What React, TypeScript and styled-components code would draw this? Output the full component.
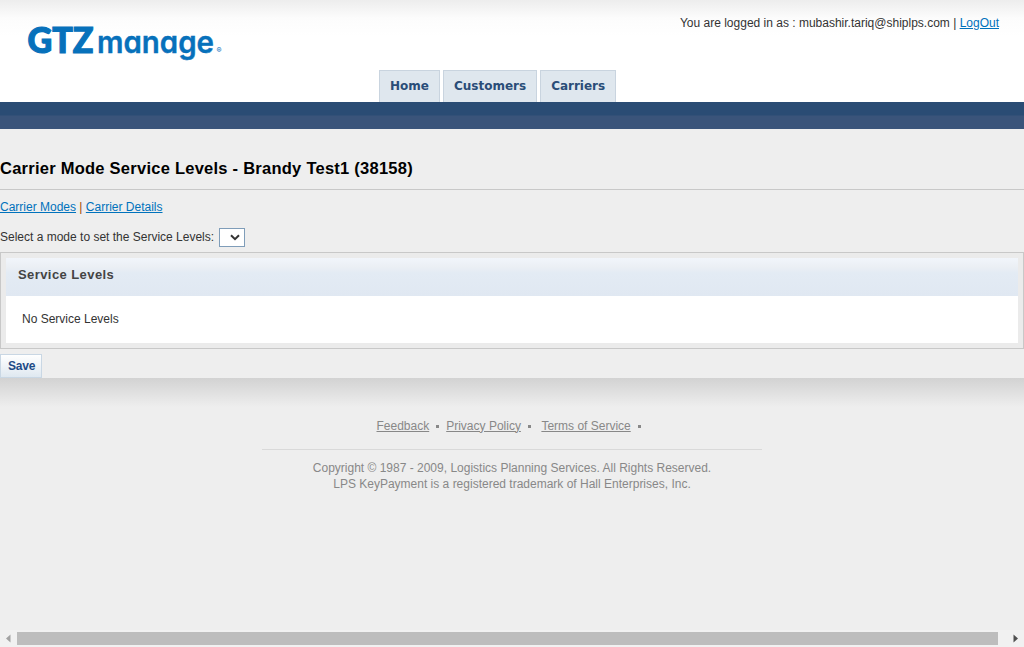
import React from "react";
import styled, { createGlobalStyle } from "styled-components";

const GlobalStyle = createGlobalStyle`
  html, body, #root { height: 100%; }
  body {
    margin: 0;
    overflow: hidden;
    background: #eee;
    color: #333;
    font: 12px/16px "Liberation Sans", Arial, sans-serif;
  }
`;

const Page = styled.div`
  display: flex;
  flex-direction: column;
  height: 100vh;
`;
const Header = styled.header`
  display: flex;
  flex-direction: column;
  justify-content: space-between;
  height: 102px;
  background: linear-gradient(#ededed, #fcfcfc 18px, #fff 36px);
`;
const Masthead = styled.div`
  display: flex;
  justify-content: space-between;
  padding: 15px 25px 0 24px;
`;
const Logo = styled.svg`
  display: block;
  width: 202px;
  height: 50px;
  fill: #0771bb;
  stroke: #0771bb;
  font-family: Inter, "Liberation Sans", sans-serif;
  font-feature-settings: "cv11";
`;
const Link = styled.a`
  color: #0072bc;
  text-decoration: underline;
`;
const Tabs = styled.nav`
  display: flex;
  gap: 3px;
  padding-left: 379px;
`;
const Tab = styled.a`
  box-sizing: border-box;
  height: 32px;
  padding: 0 10px;
  border: 1px solid #c9d4df;
  border-bottom: 0;
  background: #dfe7ee;
  color: #2a4d78;
  font: bold 12px/30px "DejaVu Sans", Verdana, sans-serif;
`;
const Band = styled.div`
  height: 27px;
  background: linear-gradient(#2a4c74 13px, #3a547a 14px);
`;
const Main = styled.main`
  display: flex;
  flex-direction: column;
  height: 249px;
`;
const Title = styled.h1`
  margin: 0;
  padding: 29px 0 10px;
  border-bottom: 1px solid #c8c8c8;
  color: #000;
  font-size: 16.5px;
  line-height: 21px;
  letter-spacing: 0.25px;
`;
const Crumbs = styled.div`
  padding-top: 9px;
  color: #a04a00;
`;
const ModeRow = styled.label`
  display: flex;
  align-items: center;
  gap: 5px;
  height: 20px;
  margin: 12px 0 5px;
`;
const ModeBox = styled.span`
  box-sizing: border-box;
  display: flex;
  align-items: center;
  justify-content: flex-end;
  width: 26px;
  height: 19px;
  padding-right: 4px;
  border: 1px solid #7f9db9;
  background: #fff;
`;
const Panel = styled.section`
  box-sizing: border-box;
  height: 97px;
  padding: 5px;
  border: 1px solid #c8c8c8;
  background: #ebebeb;
`;
const PanelTitle = styled.h2`
  margin: 0;
  height: 38px;
  padding-left: 12px;
  background: linear-gradient(#f1f5fb, #ebeff4 9px, #e3ebf4 15px, #e0e8f2);
  color: #444;
  font-size: 13px;
  line-height: 34px;
  letter-spacing: 0.42px;
`;
const PanelBody = styled.div`
  height: 47px;
  padding-left: 16px;
  background: #fff;
  line-height: 46px;
`;
const SaveButton = styled.button`
  box-sizing: border-box;
  align-self: flex-start;
  width: 42px;
  height: 24px;
  margin-top: 5px;
  padding: 0 0 0 1px;
  border: 1px solid #c9d7e4;
  background: linear-gradient(#fff, #dfe8f0);
  color: #1e4b87;
  font: bold 12px/20px "Liberation Sans", Arial, sans-serif;
  letter-spacing: -0.2px;
`;
const Footer = styled.footer`
  display: flex;
  flex: 1;
  flex-direction: column;
  align-items: center;
  background: linear-gradient(#d2d2d2, #eee 29px);
  color: #888;
  text-align: center;
`;
const FooterLinks = styled.div`
  display: flex;
  align-items: center;
  box-sizing: border-box;
  width: 500px;
  height: 72px;
  padding: 24px 0 0 114.5px;
  border-bottom: 1px solid #d9d9d9;
`;
const FooterLink = styled.a<{ $after: number }>`
  margin-right: ${(p) => p.$after}px;
  text-decoration: underline;
`;
const Dot = styled.i<{ $after: number }>`
  width: 3px;
  height: 3px;
  margin: 1px ${(p) => p.$after}px 0 0;
  background: #888;
`;
const Copyright = styled.p`
  margin: 10px 0 0;
`;
const ScrollBar = styled.div`
  display: flex;
  align-items: center;
  height: 17px;
  background: #f1f1f1;
`;
const ScrollArrow = styled.svg`
  display: block;
  width: 17px;
  height: 17px;
`;
const Thumb = styled.div`
  width: 981px;
  height: 13px;
  margin-right: 9px;
  background: #bdbdbd;
`;

export default function App() {
  return (
    <Page>
      <GlobalStyle />
      <Header>
        <Masthead>
          <Logo viewBox="0 0 202 50" aria-label="GTZ manage">
            <text x="3.5" y="38" fontFamily="Lato" fontSize="35.5" fontWeight="900" strokeWidth="1.2" textLength="66" lengthAdjust="spacingAndGlyphs">GTZ</text>
            <text x="73" y="38" fontSize="30.5" fontWeight="600" strokeWidth="0.4" textLength="117" lengthAdjust="spacingAndGlyphs">manage</text>
            <text x="192.5" y="38" fontSize="7.5" fontWeight="500" strokeWidth="0">®</text>
          </Logo>
          <div>
            You are logged in as : mubashir.tariq@shiplps.com | <Link>LogOut</Link>
          </div>
        </Masthead>
        <Tabs>
          <Tab>Home</Tab>
          <Tab>Customers</Tab>
          <Tab>Carriers</Tab>
        </Tabs>
      </Header>
      <Band />
      <Main>
        <Title>Carrier Mode Service Levels - Brandy Test1 (38158)</Title>
        <Crumbs>
          <Link>Carrier Modes</Link> | <Link>Carrier Details</Link>
        </Crumbs>
        <ModeRow>
          Select a mode to set the Service Levels:
          <ModeBox>
            <svg width="10" height="7" viewBox="0 0 10 7">
              <path d="M1 1.2 5 5.2 9 1.2" fill="none" stroke="#333" strokeWidth="2" />
            </svg>
          </ModeBox>
        </ModeRow>
        <Panel>
          <PanelTitle>Service Levels</PanelTitle>
          <PanelBody>No Service Levels</PanelBody>
        </Panel>
        <SaveButton>Save</SaveButton>
      </Main>
      <Footer>
        <FooterLinks>
          <FooterLink $after={7}>Feedback</FooterLink>
          <Dot $after={7} />
          <FooterLink $after={7}>Privacy Policy</FooterLink>
          <Dot $after={10.5} />
          <FooterLink $after={7.5}>Terms of Service</FooterLink>
          <Dot $after={0} />
        </FooterLinks>
        <Copyright>
          Copyright © 1987 - 2009, Logistics Planning Services. All Rights Reserved.
          <br />
          LPS KeyPayment is a registered trademark of Hall Enterprises, Inc.
        </Copyright>
      </Footer>
      <ScrollBar>
        <ScrollArrow viewBox="0 0 17 17">
          <path d="M10.5 4.5v8L6 8.5z" fill="#a3a3a3" />
        </ScrollArrow>
        <Thumb />
        <ScrollArrow viewBox="0 0 17 17">
          <path d="M6.5 4.5v8l4.5-4z" fill="#505050" />
        </ScrollArrow>
      </ScrollBar>
    </Page>
  );
}
